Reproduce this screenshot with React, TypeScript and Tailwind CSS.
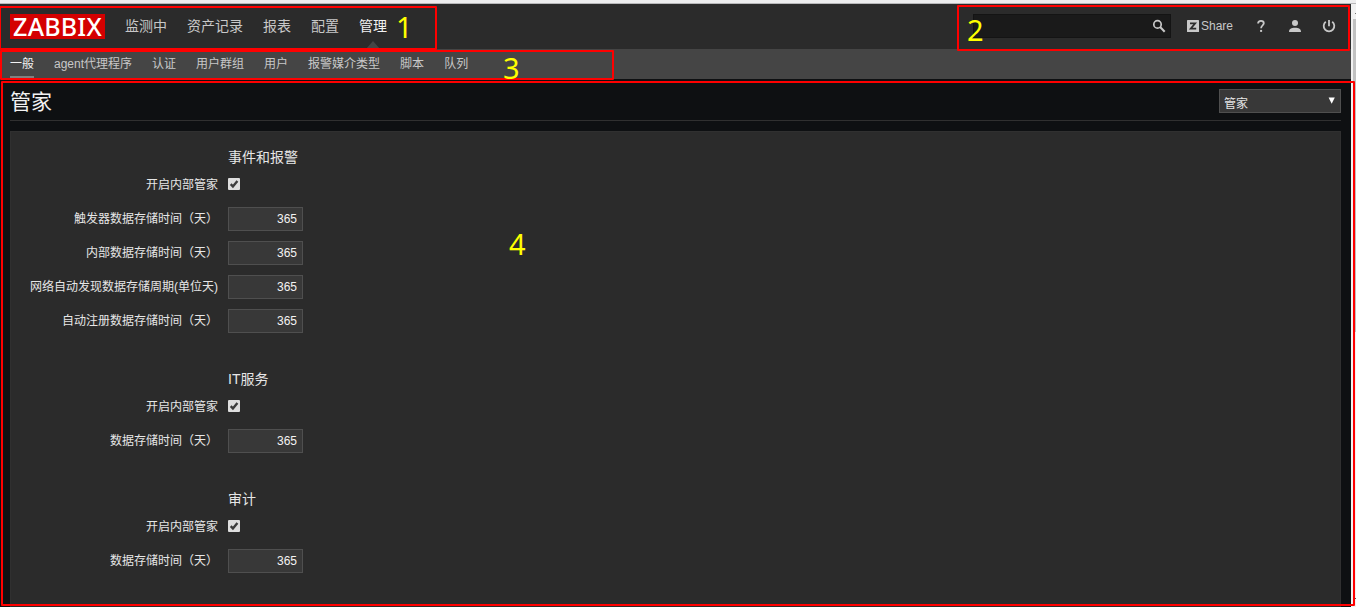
import React from "react";

const mainMenu = ["监测中", "资产记录", "报表", "配置", "管理"];
const subMenu = ["一般", "agent代理程序", "认证", "用户群组", "用户", "报警媒介类型", "脚本", "队列"];

const sections = [
  {
    title: "事件和报警",
    fields: [
      "触发器数据存储时间（天）",
      "内部数据存储时间（天）",
      "网络自动发现数据存储周期(单位天)",
      "自动注册数据存储时间（天）",
    ],
  },
  { title: "IT服务", fields: ["数据存储时间（天）"] },
  { title: "审计", fields: ["数据存储时间（天）"] },
];

function Checkbox() {
  return (
    <svg width="12" height="12" viewBox="0 0 12 12" role="checkbox" aria-checked="true">
      <rect width="12" height="12" rx="1" fill="#dedede" />
      <path d="M2.7 6.2 4.9 8.4 9.4 3" fill="none" stroke="#3c3c3c" strokeWidth="2.4" />
    </svg>
  );
}

function Header() {
  return (
    <header className="flex h-[45px] shrink-0 items-start bg-[#2b2b2b] pl-[10px]">
      <div className="mt-[10px] flex h-[25px] w-[95px] items-center justify-center bg-[#d40000] font-['Noto_Sans'] text-[25px] font-medium leading-[25px] tracking-[0.2px] text-white">
        ZABBIX
      </div>
      <nav className="ml-5 flex gap-5 text-[14px] leading-5 text-[#c8c8c8]">
        {mainMenu.map((item, i) => (
          <a key={item} className={i === 4 ? "relative h-[45px] pt-[12px] text-[#f2f2f2]" : "h-[45px] pt-[12px]"}>
            {item}
            {i === 4 && (
              <svg className="absolute bottom-0 left-[7px]" width="14" height="8" viewBox="0 0 14 8">
                <path d="M0 8 7 0l7 8z" fill="#454545" />
              </svg>
            )}
          </a>
        ))}
      </nav>
      <div className="ml-auto mt-[10px] flex h-6 items-center">
        <div className="flex h-6 w-[198px] items-center justify-end border border-[#141414] bg-[#1a1a1a] pr-[4px]">
          <svg width="14" height="14" viewBox="0 0 14 14" fill="none" stroke="#c8c8c8">
            <circle cx="5.5" cy="5.4" r="3.7" strokeWidth="1.7" />
            <path d="m8.1 8.1 4.6 4.6" strokeWidth="2.1" />
          </svg>
        </div>
        <a className="ml-4 flex items-center gap-[2px] text-[12px] text-[#c8c8c8]">
          <svg width="12" height="12" viewBox="0 0 12 12">
            <rect width="12" height="12" rx="0.6" fill="#c8c8c8" />
            <path d="M3 3.4h5.2L3.7 8.7h5.5" fill="none" stroke="#2b2b2b" strokeWidth="1.7" />
          </svg>
          <span className="w-[32px]">Share</span>
        </a>
        <svg className="ml-[22px]" width="12" height="14" viewBox="0 0 12 14" fill="none" stroke="#c8c8c8" strokeWidth="1.8">
          <path d="M3.1 4.5C3.1 2.8 4.3 1.9 6 1.9s2.8 1 2.8 2.4c0 2.1-2.7 2-2.7 4.9" />
          <path d="M6.1 10.9v2" strokeWidth="2" />
        </svg>
        <svg className="ml-[22px]" width="12" height="12" viewBox="0 0 12 12" fill="#c8c8c8">
          <circle cx="6" cy="3" r="3" />
          <path d="M0 12c0-3 2.2-4.2 6-4.2s6 1.2 6 4.2z" />
        </svg>
        <svg className="ml-[21px] mr-[15px]" width="14" height="14" viewBox="0 0 14 14" fill="none" stroke="#c8c8c8" strokeWidth="1.8">
          <path d="M7 1v6.3M3.8 2.8a5.3 5.3 0 1 0 6.4 0" />
        </svg>
      </div>
    </header>
  );
}

function Section({ title, fields }: { title: string; fields: string[] }) {
  return (
    <section className="flex flex-col">
      <h2 className="ml-[217px] h-5 text-[14px] leading-5">{title}</h2>
      <div className="mt-[7px] flex h-5 items-center gap-[10px]">
        <label className="mt-[2px] w-[207px] text-right leading-[18px]">开启内部管家</label>
        <Checkbox />
      </div>
      <div className="mt-[13px] flex flex-col gap-[10px]">
        {fields.map((label) => (
          <div key={label} className="flex h-6 items-center gap-[10px]">
            <label className="-mt-px w-[207px] whitespace-nowrap text-right">{label}</label>
            <input
              defaultValue="365"
              className="h-6 w-[75px] border border-[#4f4f4f] bg-[#383838] px-[5px] text-right text-[12px] text-[#f2f2f2] outline-none"
            />
          </div>
        ))}
      </div>
    </section>
  );
}

export default function App() {
  return (
    <div className="relative flex h-[607px] w-[1356px] flex-col overflow-hidden bg-[#0e1012] font-['Liberation_Sans','Noto_Sans_CJK_SC',sans-serif] text-[12px] text-[#e6e6e6]">
      <div className="h-[4px] shrink-0 border-b border-[#b8b8ba] bg-[#ededee]" />
      <div className="flex min-h-0 flex-1">
        <div className="flex w-[1351px] flex-col">
          <Header />
          <nav className="flex h-[30px] shrink-0 gap-5 bg-[#454545] pl-[10px] leading-[18px] text-[#c8c8c8]">
            {subMenu.map((item, i) => (
              <a
                key={item}
                className={i === 0 ? "h-[29px] border-b-2 border-[#808080] pt-[6px] text-[#f2f2f2]" : "h-[29px] pt-[6px]"}
              >
                {item}
              </a>
            ))}
          </nav>
          <main className="flex min-h-0 flex-1 flex-col px-[10px]">
            <div className="flex h-[42px] shrink-0 items-start justify-between border-b border-[#303030]">
              <h1 className="mt-[8px] text-[21px] leading-[30px] text-[#f2f2f2]">管家</h1>
              <button className="mt-[10px] flex h-6 w-[122px] items-center justify-between border border-[#4f4f4f] bg-[#383838] pl-1 pr-[5px] text-left">
                <span className="mt-[5px] leading-[18px]">管家</span>
                <svg className="-mt-px" width="7" height="7" viewBox="0 0 7 7">
                  <path d="M.6 .5h6.2L3.7 6.8z" fill="#fff" />
                </svg>
              </button>
            </div>
            <div className="mt-[10px] flex flex-1 flex-col gap-9 overflow-hidden border border-b-0 border-[#303030] bg-[#2b2b2b] pt-[15px]">
              {sections.map((s) => (
                <Section key={s.title} {...s} />
              ))}
            </div>
          </main>
        </div>
        <div className="flex flex-1 flex-col bg-[#f1f1f1] pl-[2px]">
          <div className="ml-[2px] mt-[9px] h-px bg-[#777]" />
          <div className="mt-[5px] h-[313px] bg-[#c1c1c1]" />
          <div className="ml-[2px] mt-[266px] h-px bg-[#555]" />
        </div>
      </div>

      {/* Numbered annotations laid over the page */}
      <div className="pointer-events-none absolute inset-0 font-['Noto_Sans'] text-[29px] leading-[30px] text-[#ffff00]">
        <div className="absolute -left-px top-[6px] h-[44px] w-[438px] rounded-[1px] border-2 border-[#ff0000]" />
        <div className="absolute left-[957px] top-[5px] h-[46px] w-[393px] rounded-[1px] border-2 border-[#ff0000]" />
        <div className="absolute left-0 top-[50px] h-[30px] w-[614px] rounded-[1px] border-2 border-[#ff0000]" />
        <div className="absolute left-px top-[81px] h-[525px] w-[1354px] rounded-[1px] border-2 border-[#ff0000]" />
        <span className="absolute left-[396px] top-[12px]">1</span>
        <span className="absolute left-[967px] top-[15px]">2</span>
        <span className="absolute left-[503px] top-[53px]">3</span>
        <span className="absolute left-[509px] top-[229px]">4</span>
      </div>
    </div>
  );
}
